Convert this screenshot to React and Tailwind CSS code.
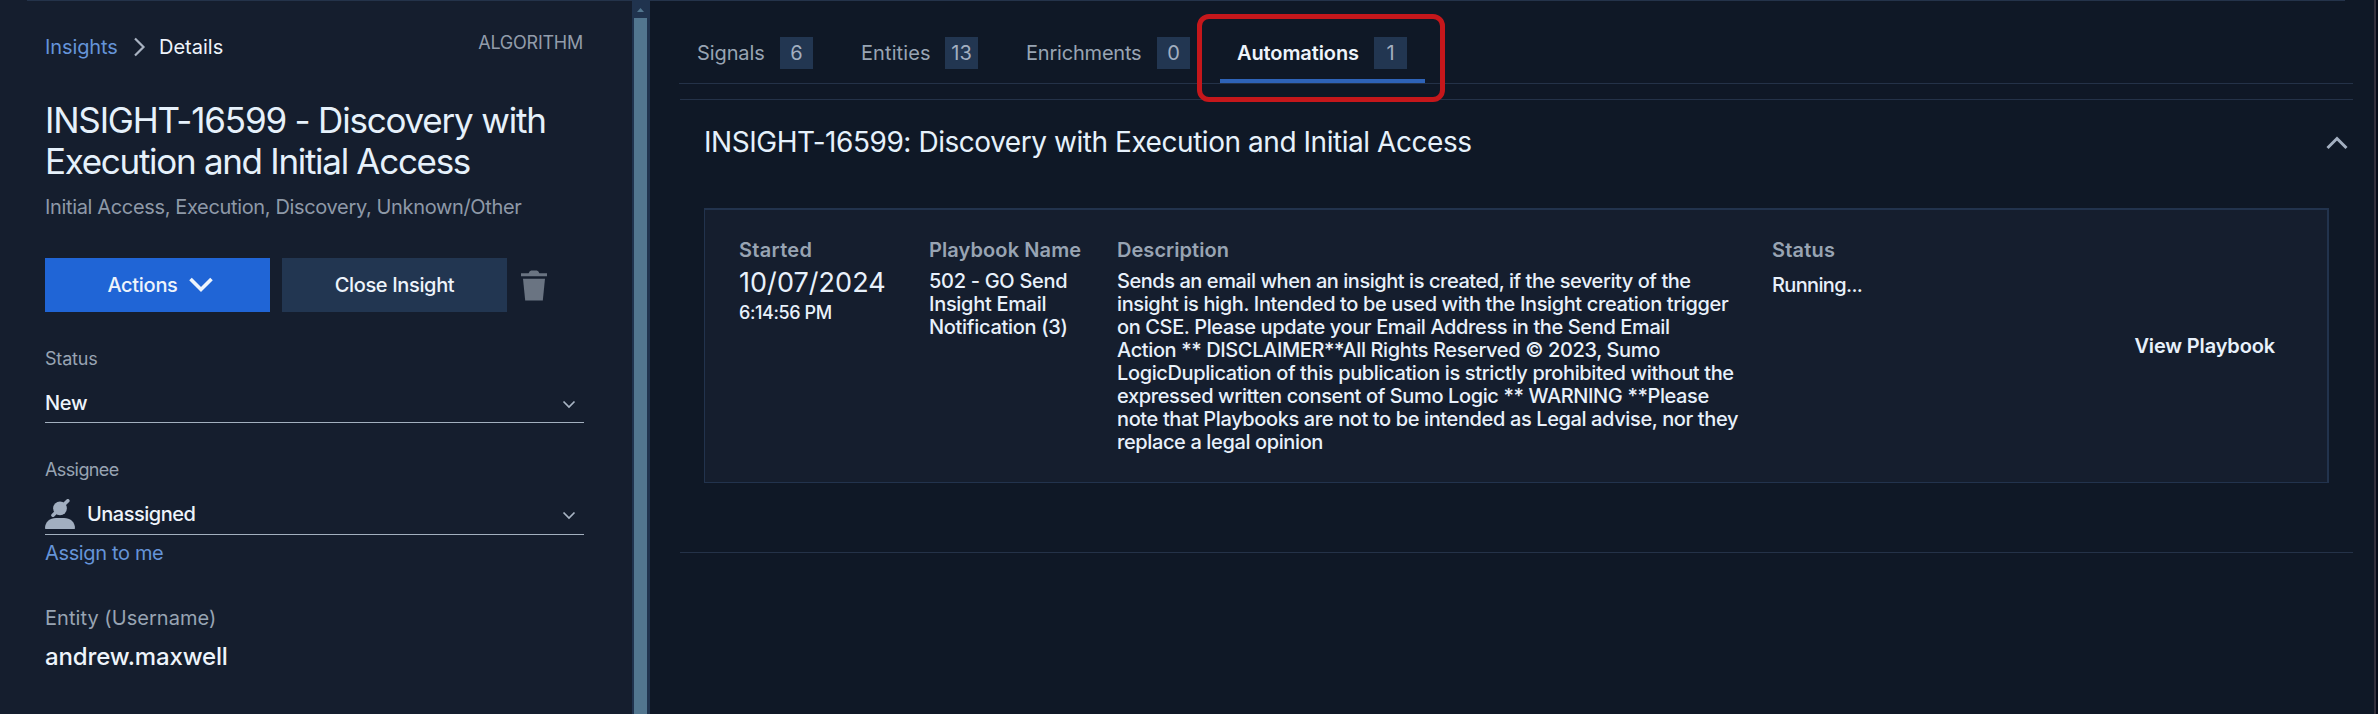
const tabs = [
  { label: 'Signals', count: 6, width: 'w-[68px]', text: 'tracking-[-0.1px]' },
  { label: 'Entities', count: 13, width: 'w-[69px]', text: 'tracking-[0.1px]' },
  { label: 'Enrichments', count: 0, width: 'w-[116px]', text: 'tracking-[-0.2px]' },
  { label: 'Automations', count: 1, width: 'w-[121px]', text: '-ml-px mr-px tracking-[-0.1px]', active: true },
];

const descriptionLines = [
  'Sends an email when an insight is created, if the severity of the',
  'insight is high. Intended to be used with the Insight creation trigger',
  'on CSE. Please update your Email Address in the Send Email',
  'Action ** DISCLAIMER**All Rights Reserved © 2023, Sumo',
  'LogicDuplication of this publication is strictly prohibited without the',
  'expressed written consent of Sumo Logic ** WARNING **Please',
  'note that Playbooks are not to be intended as Legal advise, nor they',
  'replace a legal opinion',
];

function Chevron({ points, className, width }) {
  return (
    <svg className={className} fill="none" stroke="currentColor" strokeWidth={width}>
      <polyline points={points} />
    </svg>
  );
}

function SelectChevron() {
  return <Chevron className="mr-[8px] h-[9px] w-[14px] text-[#a9b5c4]" points="1.5,1.5 7,7 12.5,1.5" width="1.7" />;
}

function TrashIcon() {
  return (
    <svg className="ml-[13px] h-[31px] w-[28px] text-[#6a7482]" viewBox="0 0 28 31" fill="currentColor">
      <path d="M1 3.2h7.600Q9.600 0.400 11.200 0.400h5.600q1.600 0 2.600 2.800H27V6.200H1z" />
      <path d="M3 8.800h22L22.800 30.400H5.200z" />
    </svg>
  );
}

function UnassignedIcon() {
  return (
    <svg className="h-[30px] w-[30px] shrink-0 text-[#a2afc0]" viewBox="0 0 30 30" fill="currentColor">
      <circle cx="15" cy="9.3" r="6.9" />
      <path d="M8 16.2 22.8 1.8" stroke="currentColor" strokeWidth="3.6" strokeLinecap="round" />
      <path d="M0 29.2C0 23 4.800 19 11 19h8c6.200 0 11 4 11 10.200q0 .8-.8.8H.8Q0 30 0 29.200z" />
    </svg>
  );
}

function Sidebar() {
  return (
    <aside className="w-[632px] shrink-0 bg-[#151e2e] pl-[45px] pr-[48px] text-[20px] leading-6">
      <div className="-ml-[18px] -mr-[48px] h-px bg-[#24334a]" />
      <div className="mt-[30px] flex h-[28px] items-start justify-between">
        <nav className="mt-1 flex items-center">
          <a className="w-[74px] tracking-[-0.1px] text-[#6594d8]">Insights</a>
          <Chevron className="ml-[14px] h-[20px] w-[13px] text-[#a9b3c2]" points="2,1.5 10.5,10 2,18.5" width="2.2" />
          <span className="ml-[13px] text-[#eef4fb]">Details</span>
        </nav>
        <span className="mr-px text-[18px] tracking-[-0.25px] text-[#929caa]">ALGORITHM</span>
      </div>
      <h1 className="mt-[41px] whitespace-nowrap text-[35px] font-normal leading-[41px] text-[#e6f1fb]">
        <span className="tracking-[-1.200px]">INSIGHT-16599 - Discovery with</span>
        <br />
        <span className="tracking-[-1.300px]">Execution and Initial Access</span>
      </h1>
      <p className="mt-[13px] whitespace-nowrap tracking-[-0.35px] text-[#8e99a8]">
        Initial Access, Execution, Discovery, Unknown/Other
      </p>
      <div className="mt-[39px] flex h-[54px] items-center font-medium text-[#eef4fb]">
        <button className="flex h-full w-[225px] items-center justify-center gap-[11px] bg-[#2065d6] pl-[5px]">
          <span className="tracking-[-0.3px]">Actions</span>
          <Chevron className="h-[16px] w-[24px]" points="1.500,2 12,12.500 22.500,2" width="3.600" />
        </button>
        <button className="ml-3 h-full w-[225px] bg-[#223651] tracking-[-0.35px]">Close Insight</button>
        <TrashIcon />
      </div>
      <label className="mt-[35px] block text-[18px] tracking-[-0.2px] text-[#98a4b3]">Status</label>
      <div className="mt-[20px] flex h-[32px] items-start justify-between border-b border-[#a3b0bf]">
        <span className="font-medium tracking-[-0.3px] text-[#eef4fb]">New</span>
        <div className="pt-[9px]"><SelectChevron /></div>
      </div>
      <label className="mt-[35px] block text-[18px] tracking-[-0.6px] text-[#98a4b3]">Assignee</label>
      <div className="mt-[17px] flex h-[36px] items-start border-b border-[#a3b0bf]">
        <UnassignedIcon />
        <span className="ml-[12px] mt-[3px] font-medium tracking-[-0.5px] text-[#eef4fb]">Unassigned</span>
        <div className="ml-auto pt-[12px]"><SelectChevron /></div>
      </div>
      <a className="mt-[6px] block tracking-[-0.35px] text-[#6594d8]">Assign to me</a>
      <p className="mt-[41px] tracking-[0.05px] text-[#98a4b3]">Entity (Username)</p>
      <p className="mt-[11px] text-[24px] font-medium leading-8 tracking-[-0.15px] text-[#eef4fb]">andrew.maxwell</p>
    </aside>
  );
}

function Scrollbar() {
  return (
    <div className="flex w-[18px] shrink-0 flex-col bg-[#20334e] pl-[2px] pr-[3px]">
      <div className="flex h-[18px] items-start justify-center pt-[8px]">
        <svg className="h-[4px] w-[7px]" viewBox="0 0 7 4">
          <path d="M0 4 3.500 0 7 4z" fill="#52768f" />
        </svg>
      </div>
      <div className="flex-1 bg-[#52768f]" />
    </div>
  );
}

function TabBar() {
  return (
    <div className="flex h-[83px] gap-3 border-b border-[#243248]">
      {tabs.map((tab) => (
        <div
          key={tab.label}
          className={
            'flex items-center border-b-4 px-[18px] pt-[34px] pb-[8px] ' +
            (tab.active ? 'border-[#2e63b8]' : 'border-transparent')
          }
        >
          <span
            className={
              'whitespace-nowrap ' + tab.width + ' ' + tab.text + ' ' +
              (tab.active ? 'font-semibold text-[#eef4fb]' : 'text-[#98a4b3]')
            }
          >
            {tab.label}
          </span>
          <span className="ml-[15px] flex h-8 w-[33px] items-center justify-center bg-[#223651] text-[#a3afc0]">
            {tab.count}
          </span>
        </div>
      ))}
    </div>
  );
}

function PlaybookCard() {
  return (
    <article className="ml-6 mr-6 mt-[48px] grid h-[275px] grid-cols-[189px_188px_655px_1fr_auto] border border-t-2 border-r-2 border-[#22334d] bg-[#151e2e] pl-[35px] pr-[52px] font-medium text-[#e8f1fb]">
      <div className="-ml-px pt-[28px]">
        <h3 className="font-semibold tracking-[0.3px] text-[#98a4b3]">Started</h3>
        <p className="mt-[7px] text-[27px] font-normal leading-7 tracking-[0.05px]">10/07/2024</p>
        <p className="mt-1 text-[18px] tracking-[-0.4px]">6:14:56 PM</p>
      </div>
      <div className="pt-[28px]">
        <h3 className="font-semibold tracking-[0.1px] text-[#98a4b3]">Playbook Name</h3>
        <p className="mt-[8px] whitespace-nowrap leading-[23px] tracking-[-0.3px]">
          502 - GO Send
          <br />
          Insight Email
          <br />
          Notification (3)
        </p>
      </div>
      <div className="pt-[28px]">
        <h3 className="font-semibold tracking-[0.05px] text-[#98a4b3]">Description</h3>
        <p className="mt-[8px] whitespace-nowrap leading-[23px] tracking-[-0.38px]">
          {descriptionLines.map((line, i) => (
            <span key={line} className={i === 0 ? 'block tracking-[-0.45px]' : 'block'}>{line}</span>
          ))}
        </p>
      </div>
      <div className="pt-[28px]">
        <h3 className="font-semibold tracking-[0.2px] text-[#98a4b3]">Status</h3>
        <p className="mt-[11px] tracking-[-0.65px]">Running...</p>
      </div>
      <a className="self-center font-semibold tracking-[-0.15px]">View Playbook</a>
    </article>
  );
}

export default function App() {
  return (
    <div className="h-[719px] w-[2378px] overflow-hidden bg-white font-['Inter',sans-serif]">
      <div className="relative flex h-[714px] bg-[#060b18]">
        <Sidebar />
        <Scrollbar />
        <main className="w-[1726px] shrink-0 border-r-2 border-[#33303c] bg-[#0f1826] text-[20px] leading-6">
          <div className="mr-[29px] h-px bg-[#24334a]" />
          <div className="ml-[29px] mr-[21px]">
            <TabBar />
            <section className="ml-px mt-[15px] h-[454px] border-y border-[#243248]">
              <div className="flex items-start justify-between pl-[24px] pr-[5px] pt-6">
                <h2 className="whitespace-nowrap text-[28px] font-normal leading-9 tracking-[-0.450px] text-[#e6f1fb]">
                  INSIGHT-16599: Discovery with Execution and Initial Access
                </h2>
                <Chevron className="mt-[12px] h-[14px] w-[22px] text-[#a3afc0]" points="1.500,12 11,2.500 20.500,12" width="3" />
              </div>
              <PlaybookCard />
            </section>
          </div>
        </main>
        <div className="pointer-events-none absolute left-[1197px] top-[14px] h-[88px] w-[248px] rounded-[12px] border-[5px] border-[#c5171b]" />
      </div>
    </div>
  );
}
